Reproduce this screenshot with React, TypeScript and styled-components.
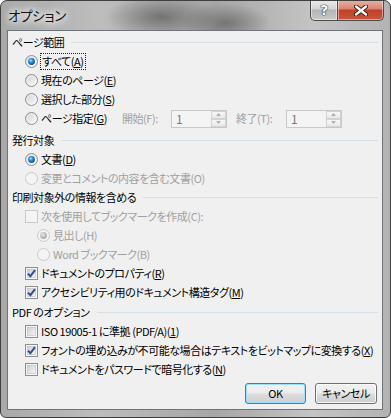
import React from "react";
import styled, { createGlobalStyle } from "styled-components";

const FONT = `"Noto Sans CJK JP", "Noto Sans", sans-serif`;

const GlobalStyle = createGlobalStyle`
  body {
    margin: 0;
    background: #ffffff;
  }
`;

const Window = styled.div`
  box-sizing: border-box;
  width: 391px;
  height: 418px;
  display: flex;
  flex-direction: column;
  padding: 0 7px 7px 6px;
  border: 1px solid #3f3f3f;
  border-radius: 7px 7px 6px 6px;
  overflow: hidden;
  background:
    radial-gradient(ellipse 55px 22px at 160px 16px, rgba(95, 95, 95, 0.75), rgba(95, 95, 95, 0)),
    radial-gradient(ellipse 45px 20px at 225px 22px, rgba(95, 95, 95, 0.7), rgba(95, 95, 95, 0)),
    linear-gradient(90deg, #a9a9a9 0%, #bdbdbd 25%, #a6a6a6 55%, #c4c4c4 80%, #b2b2b2 100%);
  font-family: ${FONT};
  font-feature-settings: "palt";
  font-size: 11px;
  letter-spacing: -0.45px;
  color: #000;
`;

const TitleBar = styled.div`
  height: 29px;
  display: flex;
  justify-content: space-between;
  align-items: flex-start;
`;

const Title = styled.div`
  padding: 5px 0 0 1px;
  font-size: 13.5px;
  letter-spacing: -0.3px;
  line-height: 18px;
  color: #111;
  text-shadow: 0 0 6px #fff, 0 0 8px #fff, 0 0 10px rgba(255, 255, 255, 0.9);
`;

const Caption = styled.div`
  display: flex;
  margin: -1px -1px 0 0;
`;

const CaptionButton = styled.div<{ $close?: boolean }>`
  box-sizing: border-box;
  width: ${(p) => (p.$close ? "47px" : "28px")};
  height: 21px;
  display: flex;
  align-items: center;
  justify-content: center;
  border: 1px solid #4c4c4c;
  border-top: none;
  margin-left: ${(p) => (p.$close ? "-1px" : "0")};
  border-radius: ${(p) => (p.$close ? "0 0 5px 0" : "0 0 0 5px")};
  background: ${(p) =>
    p.$close
      ? "linear-gradient(180deg, #e7b3a8 0%, #d9846f 45%, #c1402a 50%, #c8563c 100%)"
      : "linear-gradient(180deg, #ececec 0%, #d4d4d4 45%, #b4b4b4 50%, #c9c9c9 100%)"};
  box-shadow: inset 0 0 0 1px rgba(255, 255, 255, 0.45);
`;

const HelpGlyph = styled.span`
  font-family: "DejaVu Sans", sans-serif;
  font-weight: bold;
  font-size: 14px;
  line-height: 14px;
  color: #fff;
  text-shadow: 0 0 1px #333, 0 0 1px #333, 0 0 1px #333;
`;

const Client = styled.div`
  flex: 1;
  display: flex;
  flex-direction: column;
  background: #f0f0f0;
  border: 1px solid #6f747a;
  padding: 2px 4px 0 4px;
`;

const SectionHeader = styled.div<{ $mt?: number }>`
  height: 19px;
  margin-top: ${(p) => p.$mt ?? 0}px;
  display: flex;
  align-items: center;
  gap: 7px;
  line-height: 19px;
  white-space: nowrap;

  &::after {
    content: "";
    flex: 1;
    height: 1px;
    background: #d5dfe5;
  }
`;

const Row = styled.div<{ $indent?: number }>`
  height: 19px;
  display: flex;
  align-items: center;
  gap: 3px;
  padding-left: ${(p) => p.$indent ?? 13}px;
  line-height: 19px;
  white-space: nowrap;
`;

const Label = styled.span<{ $disabled?: boolean; $w?: number }>`
  color: ${(p) => (p.$disabled ? "#a0a0a0" : "#000")};
  width: ${(p) => (p.$w ? `${p.$w}px` : "auto")};
  flex: none;
`;

const Focus = styled.span`
  outline: 1px dotted #222;
  outline-offset: 0;
  line-height: 15px;
  padding: 0 1px;
`;

const Field = styled.div<{ $ml: number }>`
  display: flex;
  align-items: center;
  margin-left: ${(p) => p.$ml}px;
`;

const SpinBox = styled.div`
  box-sizing: border-box;
  width: 56px;
  height: 18px;
  display: flex;
  border: 1px solid #c8c8c8;
  background: #f4f4f4;
`;

const SpinValue = styled.span`
  flex: 1;
  padding-left: 4px;
  line-height: 16px;
  font-size: 12px;
  color: #7a7a7a;
`;

const SpinButtons = styled.div`
  width: 15px;
  display: flex;
  flex-direction: column;
`;

const SpinHalf = styled.div`
  box-sizing: border-box;
  flex: 1;
  display: flex;
  align-items: center;
  justify-content: center;
  border: 1px solid #d3d3d3;
  background: linear-gradient(180deg, #f7f7f7, #e9e9e9);
`;

const ButtonBar = styled.div`
  display: flex;
  justify-content: flex-end;
  gap: 9px;
  margin-top: 4px;
  padding-right: 1px;
`;

const PushButton = styled.div<{ $default?: boolean; $w: number }>`
  box-sizing: border-box;
  width: ${(p) => p.$w}px;
  height: 21px;
  display: flex;
  align-items: center;
  justify-content: center;
  border: 1px solid ${(p) => (p.$default ? "#3c7fb1" : "#707070")};
  border-radius: 3px;
  background: linear-gradient(180deg, #f2f2f2 0%, #ebebeb 48%, #dddddd 52%, #cfcfcf 100%);
  box-shadow: ${(p) =>
    p.$default ? "inset 0 0 0 1px #9ee0ff" : "inset 0 0 0 1px rgba(255,255,255,0.8)"};
  line-height: 19px;
`;

const Radio = ({ checked = false, disabled = false }: { checked?: boolean; disabled?: boolean }) => (
  <svg width="13" height="13" viewBox="0 0 13 13" style={{ flex: "none" }}>
    <defs>
      <linearGradient id="rbg" x1="0" y1="0" x2="1" y2="1">
        <stop offset="0" stopColor="#d2d2d2" />
        <stop offset="1" stopColor="#fbfbfb" />
      </linearGradient>
      <radialGradient id="rdot" cx="0.4" cy="0.35" r="0.7">
        <stop offset="0" stopColor="#9fe2ff" />
        <stop offset="0.45" stopColor="#2a8ad4" />
        <stop offset="1" stopColor="#0b4a86" />
      </radialGradient>
      <radialGradient id="rdotd" cx="0.4" cy="0.35" r="0.7">
        <stop offset="0" stopColor="#e6e6e6" />
        <stop offset="1" stopColor="#a3a3a3" />
      </radialGradient>
    </defs>
    <circle
      cx="6.5"
      cy="6.5"
      r="6"
      fill={disabled ? "#f4f4f4" : "url(#rbg)"}
      stroke={disabled ? "#c9c9c9" : "#8e8f8f"}
    />
    {!disabled && <circle cx="6.5" cy="6.5" r="4.6" fill="none" stroke="#ffffff" strokeOpacity="0.5" />}
    {checked && <circle cx="6.5" cy="6.5" r="3.4" fill={disabled ? "url(#rdotd)" : "url(#rdot)"} />}
  </svg>
);

const Check = ({ checked = false, disabled = false }: { checked?: boolean; disabled?: boolean }) => (
  <svg width="13" height="13" viewBox="0 0 13 13" style={{ flex: "none" }}>
    <defs>
      <linearGradient id="cbg" x1="0" y1="0" x2="1" y2="1">
        <stop offset="0" stopColor="#cfcfcf" />
        <stop offset="1" stopColor="#f7f7f7" />
      </linearGradient>
    </defs>
    <rect
      x="0.5"
      y="0.5"
      width="12"
      height="12"
      fill={disabled ? "#f4f4f4" : "#f6f6f6"}
      stroke={disabled ? "#c9c9c9" : "#8e8f8f"}
    />
    {!disabled && <rect x="2.5" y="2.5" width="8" height="8" fill="url(#cbg)" stroke="#bdbdbd" strokeWidth="0.6" />}
    {checked && (
      <path d="M3 6.6 L5.4 9.2 L10 3.2" fill="none" stroke="#2f4e9e" strokeWidth="2" strokeLinejoin="miter" />
    )}
  </svg>
);

const Arrow = ({ up }: { up?: boolean }) => (
  <svg width="5" height="3" viewBox="0 0 5 3">
    <path d={up ? "M0 3 L2.5 0 L5 3 Z" : "M0 0 L2.5 3 L5 0 Z"} fill="#b0b0b0" />
  </svg>
);

const Spinner = () => (
  <SpinBox>
    <SpinValue>1</SpinValue>
    <SpinButtons>
      <SpinHalf>
        <Arrow up />
      </SpinHalf>
      <SpinHalf>
        <Arrow />
      </SpinHalf>
    </SpinButtons>
  </SpinBox>
);

export default function App() {
  return (
    <>
      <GlobalStyle />
      <Window>
        <TitleBar>
          <Title>オプション</Title>
          <Caption>
            <CaptionButton>
              <HelpGlyph>?</HelpGlyph>
            </CaptionButton>
            <CaptionButton $close>
              <svg width="14" height="11" viewBox="0 0 14 11">
                <path
                  d="M2 1.5 L12 9.5 M12 1.5 L2 9.5"
                  stroke="#3a1a12"
                  strokeWidth="4.2"
                  strokeLinecap="round"
                />
                <path d="M2 1.5 L12 9.5 M12 1.5 L2 9.5" stroke="#fff" strokeWidth="2.4" strokeLinecap="round" />
              </svg>
            </CaptionButton>
          </Caption>
        </TitleBar>

        <Client>
          <SectionHeader>ページ範囲</SectionHeader>
          <Row>
            <Radio checked />
            <Focus>
              すべて(<u>A</u>)
            </Focus>
          </Row>
          <Row>
            <Radio />
            <Label>
              現在のページ(<u>E</u>)
            </Label>
          </Row>
          <Row>
            <Radio />
            <Label>
              選択した部分(<u>S</u>)
            </Label>
          </Row>
          <Row>
            <Radio />
            <Label $w={78}>
              ページ指定(<u>G</u>)
            </Label>
            <Field $ml={0}>
              <Label $disabled $w={49}>
                開始(F):
              </Label>
              <Spinner />
            </Field>
            <Field $ml={6}>
              <Label $disabled $w={50}>
                終了(T):
              </Label>
              <Spinner />
            </Field>
          </Row>

          <SectionHeader $mt={3}>発行対象</SectionHeader>
          <Row>
            <Radio checked />
            <Label>
              文書(<u>D</u>)
            </Label>
          </Row>
          <Row>
            <Radio disabled />
            <Label $disabled>変更とコメントの内容を含む文書(O)</Label>
          </Row>

          <SectionHeader>印刷対象外の情報を含める</SectionHeader>
          <Row>
            <Check disabled />
            <Label $disabled>次を使用してブックマークを作成(C):</Label>
          </Row>
          <Row $indent={25}>
            <Radio checked disabled />
            <Label $disabled>見出し(H)</Label>
          </Row>
          <Row $indent={25}>
            <Radio disabled />
            <Label $disabled>Word ブックマーク(B)</Label>
          </Row>
          <Row>
            <Check checked />
            <Label>
              ドキュメントのプロパティ(<u>R</u>)
            </Label>
          </Row>
          <Row>
            <Check checked />
            <Label>
              アクセシビリティ用のドキュメント構造タグ(<u>M</u>)
            </Label>
          </Row>

          <SectionHeader $mt={1}>PDF のオプション</SectionHeader>
          <Row>
            <Check />
            <Label>
              ISO 19005-1 に準拠 (PDF/A)(<u>1</u>)
            </Label>
          </Row>
          <Row>
            <Check checked />
            <Label>
              フォントの埋め込みが不可能な場合はテキストをビットマップに変換する(<u>X</u>)
            </Label>
          </Row>
          <Row>
            <Check />
            <Label>
              ドキュメントをパスワードで暗号化する(<u>N</u>)
            </Label>
          </Row>

          <ButtonBar>
            <PushButton $default $w={61}>
              OK
            </PushButton>
            <PushButton $w={62}>キャンセル</PushButton>
          </ButtonBar>
        </Client>
      </Window>
    </>
  );
}
